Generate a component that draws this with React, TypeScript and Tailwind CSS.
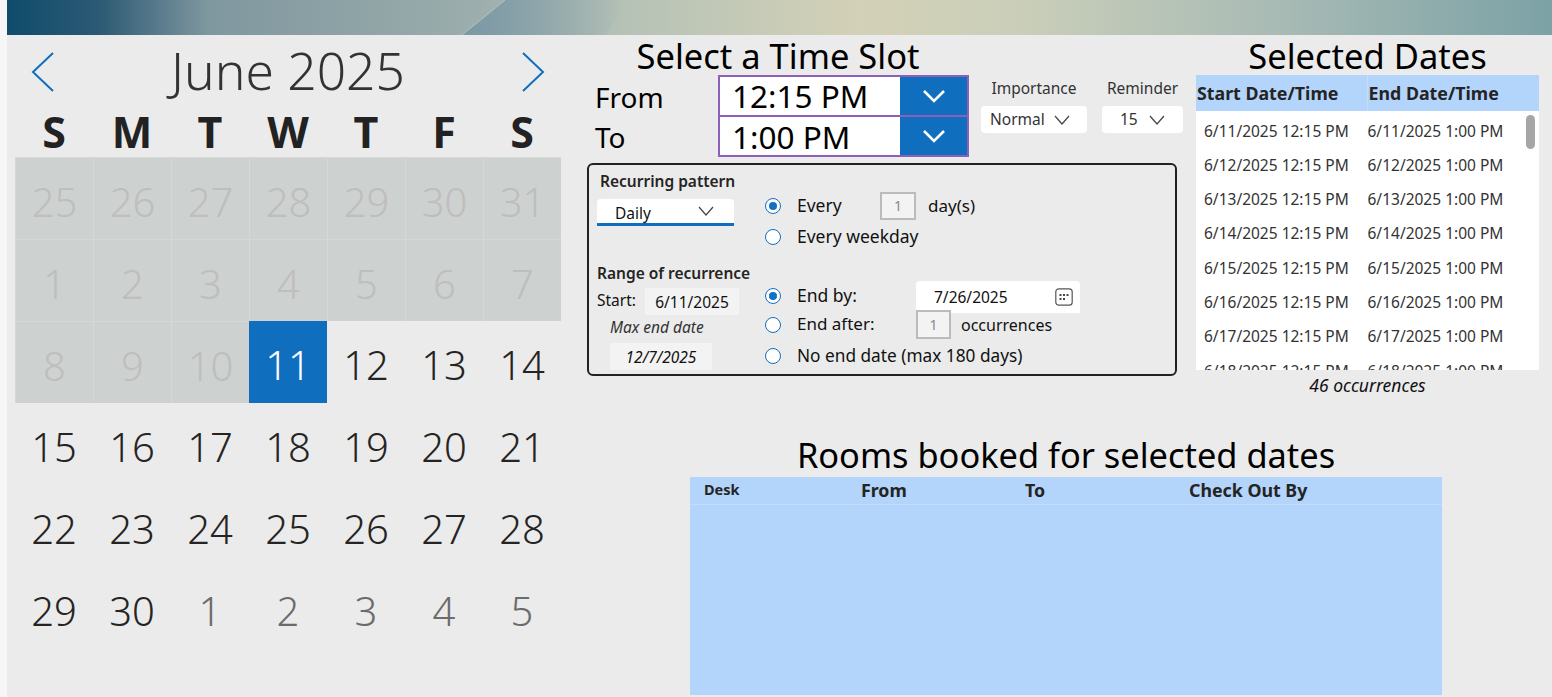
const weeks = [
  [25, 26, 27, 28, 29, 30, 31],
  [1, 2, 3, 4, 5, 6, 7],
  [8, 9, 10, 11, 12, 13, 14],
  [15, 16, 17, 18, 19, 20, 21],
  [22, 23, 24, 25, 26, 27, 28],
  [29, 30, 1, 2, 3, 4, 5],
];
const dayNames = ["S", "M", "T", "W", "T", "F", "S"];
const selectedDays = [11, 12, 13, 14, 15, 16, 17, 18];

function Chevron({ className = "w-4 h-2.5", color = "#444", width = 1.2 }: { className?: string; color?: string; width?: number }) {
  return (
    <svg viewBox="0 0 16 10" className={className} fill="none">
      <polyline points="1,1 8,9 15,1" stroke={color} strokeWidth={width} />
    </svg>
  );
}

function Radio({ on = false }: { on?: boolean }) {
  return (
    <span className="w-4 h-4 rounded-full border border-[#1170bf] bg-white flex items-center justify-center shrink-0">
      {on && <span className="w-2 h-2 rounded-full bg-[#1170bf]" />}
    </span>
  );
}

function TimeField({ value, second = false }: { value: string; second?: boolean }) {
  return (
    <div className={`w-[251px] flex border-2 border-[#8e5fb8] bg-white ${second ? "h-[40px] border-t-0" : "h-[42px]"}`}>
      <div className={`flex-1 pl-3 text-[31.5px] leading-[37px] text-black ${second ? "pt-px" : ""}`}>{value}</div>
      <div className="w-[67px] bg-[#106ebe] flex items-center justify-center">
        <svg viewBox="0 0 24 14" className="w-6 h-3.5" fill="none">
          <polyline points="2,2 12,12 22,2" stroke="white" strokeWidth="2.6" />
        </svg>
      </div>
    </div>
  );
}

function Banner() {
  return (
    <svg className="block w-full h-[35px]" viewBox="0 0 1545 35" preserveAspectRatio="none">
      <defs>
        <linearGradient id="sky" x1="0" y1="0" x2="1" y2="0">
          <stop offset="0" stopColor="#0f4c6c" />
          <stop offset="0.06" stopColor="#2c5a74" />
          <stop offset="0.13" stopColor="#7f979f" />
          <stop offset="0.3" stopColor="#9badac" />
          <stop offset="0.4" stopColor="#b6c2b6" />
          <stop offset="0.55" stopColor="#d3d1b7" />
          <stop offset="0.65" stopColor="#cbcfb9" />
          <stop offset="0.82" stopColor="#a9bbb5" />
          <stop offset="1" stopColor="#7ca2a6" />
        </linearGradient>
        <linearGradient id="wing" x1="0" y1="0" x2="1" y2="0">
          <stop offset="0" stopColor="#7a98a6" />
          <stop offset="1" stopColor="#7a98a6" stopOpacity="0" />
        </linearGradient>
      </defs>
      <rect width="1545" height="35" fill="url(#sky)" />
      <polygon points="498,0 620,0 600,35 455,35" fill="url(#wing)" />
      <line x1="498" y1="0" x2="455" y2="35" stroke="#b4c2c4" strokeWidth="1" />
    </svg>
  );
}

function Calendar() {
  return (
    <div className="w-[546px] ml-2">
      <div className="h-[80px] flex items-start justify-between px-4">
        <svg viewBox="0 0 24 40" className="w-6 h-10 mt-[17px]" fill="none">
          <polyline points="22,1 2,20 22,39" stroke="#106ebe" strokeWidth="2" />
        </svg>
        <div className="text-[51.5px] leading-none font-light text-[#333] mt-[10px]">June 2025</div>
        <svg viewBox="0 0 24 40" className="w-6 h-10 mt-[17px]" fill="none">
          <polyline points="2,1 22,20 2,39" stroke="#106ebe" strokeWidth="2" />
        </svg>
      </div>
      <div className="grid grid-cols-7 h-[42px]">
        {dayNames.map((d, i) => (
          <div key={i} className="text-center text-[43px] leading-[34px] font-bold text-[#222]">{d}</div>
        ))}
      </div>
      <div className="grid grid-cols-7 grid-rows-[repeat(6,82px)]">
        {weeks.flatMap((week, r) =>
          week.map((day, c) => {
            const past = r < 2 || (r === 2 && c < 3);
            const selected = r === 2 && c === 3;
            const next = r === 5 && c > 1;
            return (
              <div
                key={`${r}-${c}`}
                className={`flex items-center justify-center pt-1.5 text-[40px] font-light ${
                  selected
                    ? "bg-[#106ebe] text-white"
                    : past
                    ? "bg-[#cdd1d0] text-[#bfbdbd] border-l border-t border-[#d4d8d7]"
                    : next
                    ? "text-[#6b6b6b]"
                    : "text-[#252423]"
                }`}
              >
                {day}
              </div>
            );
          })
        )}
      </div>
    </div>
  );
}

function RecurringBox() {
  return (
    <div className="h-[213px] border-2 border-[#222] rounded-md mt-[6px] flex text-[17.5px] text-[#111] leading-5">
      <div className="w-[176px] pl-2 shrink-0">
        <div className="pl-[3px] pt-[6px] text-[15.5px] font-semibold text-[#252423]">Recurring pattern</div>
        <div className="mt-[8px] w-[137px] h-[27px] bg-white rounded-t border-b-[3px] border-[#106ebe] flex items-center justify-between pl-[18px] pr-[20px] text-[15.5px]">
          <span className="pt-[3px]">Daily</span>
          <Chevron />
        </div>
        <div className="mt-[37px] text-[15.5px] font-semibold text-[#252423]">Range of recurrence</div>
        <div className="mt-[5px] flex items-center text-[15.5px]">
          <span className="w-[48px] mb-[3px]">Start:</span>
          <span className="w-[94px] h-[27px] bg-[#f3f3f3] flex items-center justify-center">6/11/2025</span>
        </div>
        <div className="mt-[2px] pl-[13px] text-[15.5px] italic text-[#333]">Max end date</div>
        <div className="mt-[6px] ml-[13px] w-[102px] h-[27px] bg-[#f3f3f3] flex items-center justify-center text-[15.5px] italic">12/7/2025</div>
      </div>
      <div className="flex-1 pt-[25px]">
        <div className="h-[31px] flex items-center gap-4">
          <Radio on />
          <span className="w-[67px] -mt-0.5">Every</span>
          <span className="w-9 h-[28px] border-2 border-[#bbb] bg-[#f3f3f3] flex items-center justify-center text-[14px] text-[#888]">1</span>
          <span className="-ml-[4px] text-[17px]">day(s)</span>
        </div>
        <div className="h-[31px] flex items-center gap-4">
          <Radio />
          <span className="-mt-0.5">Every weekday</span>
        </div>
        <div className="mt-[29px] h-[29px] flex items-center gap-4">
          <Radio on />
          <span className="w-[103px] -mt-0.5">End by:</span>
          <span className="w-[164px] h-[32px] mt-[2px] bg-white rounded-t flex items-center justify-between pl-[18px] pr-[7px] text-[15.5px]">
            7/26/2025
            <svg viewBox="0 0 18 18" className="w-[18px] h-[18px]" fill="none">
              <rect x="0.8" y="0.8" width="16.4" height="16.4" rx="3" stroke="#555" strokeWidth="1.2" />
              <g fill="#444">
                <rect x="4.5" y="6" width="2" height="2" />
                <rect x="8" y="6" width="2" height="2" />
                <rect x="11.5" y="6" width="2" height="2" />
                <rect x="4.5" y="10" width="2" height="2" />
                <rect x="8" y="10" width="2" height="2" />
              </g>
            </svg>
          </span>
        </div>
        <div className="h-[29px] flex items-center gap-4">
          <Radio />
          <span className="w-[103px] -mt-0.5 text-[17px]">End after:</span>
          <span className="w-[35px] h-[29px] border-2 border-[#bbb] bg-[#f3f3f3] flex items-center justify-center text-[14px] text-[#888]">1</span>
          <span className="-ml-[6px] text-[16px]">occurrences</span>
        </div>
        <div className="h-[34px] flex items-center gap-4">
          <Radio />
          <span className="text-[17.25px]">No end date (max 180 days)</span>
        </div>
      </div>
    </div>
  );
}

function TimeSlot() {
  return (
    <div className="w-[590px] shrink-0">
      <div className="w-[382px] text-center text-[34.5px] leading-[31px] pb-1 text-black">Select a Time Slot</div>
      <div className="flex">
        <div className="w-[131px] shrink-0 pl-2 text-[28px] leading-[40px] text-black">
          <div className="pt-[2px]">From</div>
          <div>To</div>
        </div>
        <div className="flex flex-col shrink-0">
          <TimeField value="12:15 PM" />
          <TimeField value="1:00 PM" second />
        </div>
        <div className="ml-3 w-[106px] shrink-0">
          <div className="text-center text-[15.5px] leading-5 pt-[3px] text-[#333]">Importance</div>
          <div className="mt-[8px] h-[27px] bg-white rounded flex items-center justify-between pl-[9px] pr-[17px] text-[15.5px] text-[#333]">
            Normal
            <Chevron />
          </div>
        </div>
        <div className="ml-[15px] w-[81px] shrink-0">
          <div className="text-center text-[15.5px] leading-5 pt-[3px] text-[#333]">Reminder</div>
          <div className="mt-[8px] h-[27px] bg-white rounded flex items-center justify-between pl-[18px] pr-[18px] text-[15.5px] text-[#333]">
            15
            <Chevron />
          </div>
        </div>
      </div>
      <RecurringBox />
    </div>
  );
}

function SelectedDates() {
  return (
    <div className="w-[343px] shrink-0">
      <div className="text-center text-[34.5px] leading-[31px] pb-1 text-black">Selected Dates</div>
      <div className="h-9 bg-[#b3d4fb] grid grid-cols-2 text-[17.8px] font-bold text-[#252423] leading-9">
        <div className="pl-[1px] border-r border-[#c4def9]">Start Date/Time</div>
        <div className="pl-[1px]">End Date/Time</div>
      </div>
      <div className="relative h-[259px] bg-white overflow-hidden pt-[3px]">
        {selectedDays.map((d) => (
          <div key={d} className="h-[34.3px] grid grid-cols-2 items-center text-[15.5px] text-[#333]">
            <div className="pl-2">6/{d}/2025 12:15 PM</div>
            <div>6/{d}/2025 1:00 PM</div>
          </div>
        ))}
        <div className="absolute top-[4px] right-[4px] w-[9px] h-[34px] rounded-full bg-[#a6a6a6]" />
      </div>
      <div className="text-center text-[17.5px] italic leading-[31px] text-[#111]">46 occurrences</div>
    </div>
  );
}

function RoomsBooked() {
  return (
    <div className="ml-[103px] w-[752px] mt-[35px]">
      <div className="text-center text-[34.4px] leading-[37px] pb-1 text-black">Rooms booked for selected dates</div>
      <div className="h-[218px] bg-[#b3d4fb]">
        <div className="h-[28px] border-b border-[#c4def9] flex font-bold text-[#252423] text-[17.8px] leading-[27px]">
          <div className="w-[171px] pl-[14px] text-[14.5px] leading-[24px]">Desk</div>
          <div className="w-[164px]">From</div>
          <div className="w-[164px]">To</div>
          <div>Check Out By</div>
        </div>
      </div>
    </div>
  );
}

export default function App() {
  return (
    <div className="w-[1552px] h-[697px] overflow-hidden bg-[#f6f6f6] pl-[7px] font-['Noto_Sans',sans-serif]">
      <div className="h-full bg-[#ebebeb]">
        <Banner />
        <div className="flex">
          <Calendar />
          <div className="ml-[26px] pt-[5px]">
            <div className="flex gap-[19px]">
              <TimeSlot />
              <SelectedDates />
            </div>
            <RoomsBooked />
          </div>
        </div>
      </div>
    </div>
  );
}
